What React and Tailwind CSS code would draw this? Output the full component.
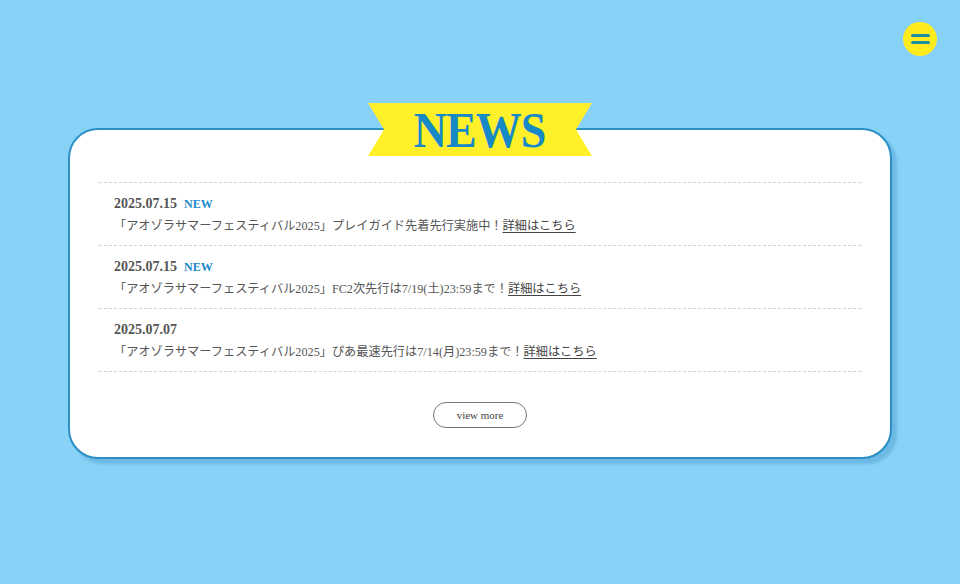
import React from "react";

const news = [
  {
    date: "2025.07.15",
    isNew: true,
    text: "「アオゾラサマーフェスティバル2025」プレイガイド先着先行実施中！",
  },
  {
    date: "2025.07.15",
    isNew: true,
    text: "「アオゾラサマーフェスティバル2025」FC2次先行は7/19(土)23:59まで！",
  },
  {
    date: "2025.07.07",
    isNew: false,
    text: "「アオゾラサマーフェスティバル2025」ぴあ最速先行は7/14(月)23:59まで！",
  },
];

const serif = "font-['Liberation_Serif','Noto_Sans_CJK_JP',serif]";

function MenuButton() {
  return (
    <button className="absolute right-[23px] top-[22px] w-[34px] h-[34px] rounded-full bg-[#ffeb1e] flex flex-col items-center justify-center gap-[4px]">
      <span className="block w-[19px] h-[3px] rounded-full bg-[#1f8fa8]" />
      <span className="block w-[19px] h-[3px] rounded-full bg-[#1f8fa8]" />
    </button>
  );
}

function NewsRow({ item }) {
  return (
    <li className="border-b border-dashed border-[#d2d2d2] pl-[15px] pt-[11px] pb-[9px]">
      <div className="flex items-baseline gap-[7px] leading-[20px]">
        <span className={`${serif} text-[14px] font-bold text-[#555]`}>{item.date}</span>
        {item.isNew && (
          <span className={`${serif} text-[12px] font-bold text-[#1a8ac8]`}>NEW</span>
        )}
      </div>
      <p className={`${serif} mt-[2px] text-[12.2px] text-[#555] leading-[20px]`}>
        {item.text}
        <a href="#" className="underline underline-offset-2 text-[#444]">
          詳細はこちら
        </a>
      </p>
    </li>
  );
}

export default function App() {
  return (
    <div className="relative min-h-screen w-full bg-[#88d2f7] overflow-hidden">
      <MenuButton />

      <main className="pt-[128px] px-[68px] pb-[120px]">
        <section className="relative rounded-[30px] border-2 border-[#2b8fc6] bg-white shadow-[5px_5px_3px_rgba(40,120,180,0.28)] px-[29px] pt-[52px] pb-[29px]">
          {/* ribbon title */}
          <div className="absolute left-1/2 top-[-27px] -translate-x-1/2 w-[224px] h-[53px] bg-[#fff02a] [clip-path:polygon(0_0,100%_0,calc(100%-16px)_50%,100%_100%,0_100%,16px_50%)] flex items-center justify-center">
            <h2 className="font-['Liberation_Serif',serif] text-[50px] leading-none font-bold text-[#1789c6] tracking-[-1px] scale-x-[0.92]">
              NEWS
            </h2>
          </div>

          <ul className="border-t border-dashed border-[#d2d2d2]">
            {news.map((item, i) => (
              <NewsRow key={i} item={item} />
            ))}
          </ul>

          <div className="flex justify-center mt-[30px]">
            <a
              href="#"
              className={`${serif} w-[94px] h-[26px] rounded-full border border-[#777] flex items-center justify-center text-[11px] text-[#444]`}
            >
              view more
            </a>
          </div>
        </section>
      </main>
    </div>
  );
}
